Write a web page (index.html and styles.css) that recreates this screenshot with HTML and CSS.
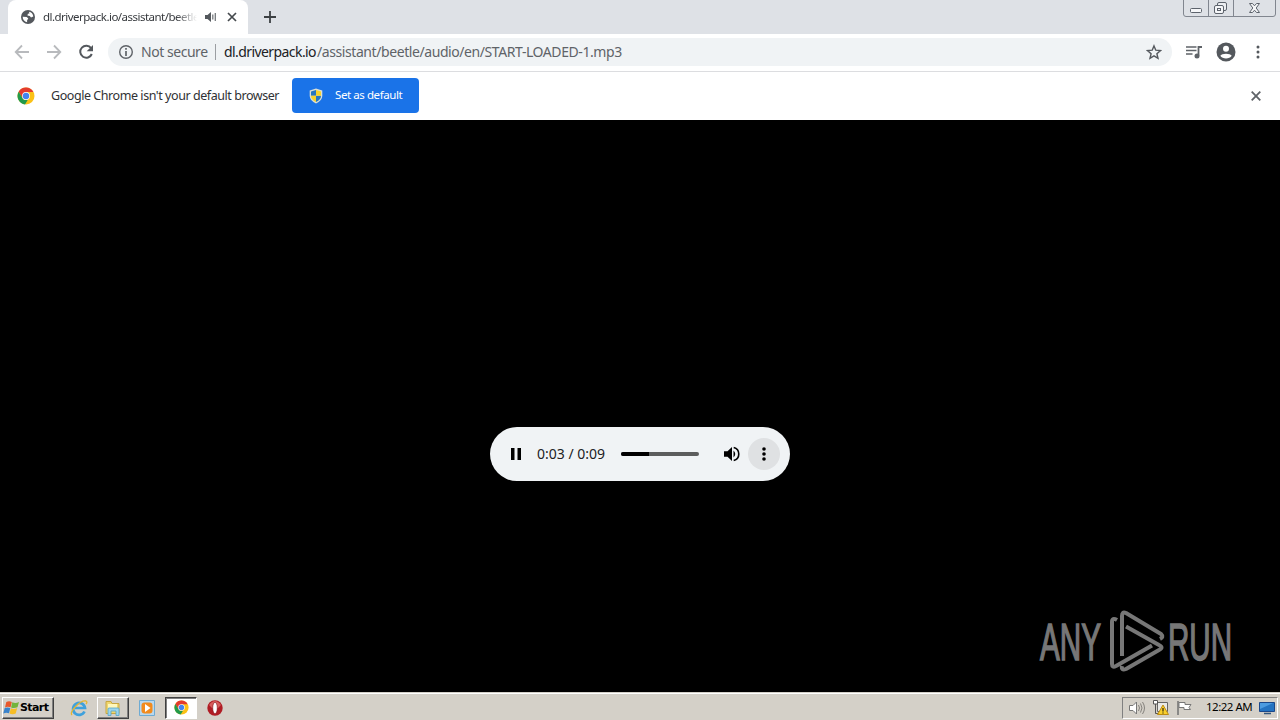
FILE: index.html
```html
<!DOCTYPE html>
<html lang="en">
<head>
<meta charset="utf-8">
<title>dl.driverpack.io/assistant/beetle/audio/en/START-LOADED-1.mp3</title>
<link rel="stylesheet" href="styles.css">
</head>
<body>
<svg class="defs" width="0" height="0">
  <symbol id="chrome" viewBox="0 0 18 18">
    <circle cx="9" cy="9" r="8.500" fill="#fbc116"/>
    <path d="M1.640 4.750A8.500 8.500 0 0 1 16.400 5H9L5.500 11Z" fill="#e33b2e"/>
    <path d="M1.640 4.750 5.500 11A4 4 0 0 0 11 12.500L8 17.450A8.500 8.500 0 0 1 1.640 4.750Z" fill="#229a4b"/>
    <circle cx="9" cy="9" r="3.900" fill="#fff"/><circle cx="9" cy="9" r="3.200" fill="#4384ef"/>
  </symbol>
</svg>
<div class="window">
  <header class="tabstrip">
    <div class="tab">
      <svg class="globe" width="14" height="14" viewBox="0 0 14 14"><circle cx="7" cy="7" r="7" fill="#54585d"/><path d="M1.700 6.800 5.700 7l1.600 1.600-1.200 1.600v2C3.300 11.800 1.600 9.600 1.700 6.800ZM8 1.700C10.500 2 12 4 12.300 6.500L10 7.400 8.800 6 6.400 5.400 6.900 3.800 8.400 3.500Z" fill="#fff"/></svg>
      <span class="tab-title">dl.driverpack.io/assistant/beetle</span>
      <svg class="tab-audio" width="12" height="12" viewBox="0 0 12 12"><path d="M0 4h2.500L6 1v10L2.500 8H0Z" fill="#54585d"/><path d="M7.800 3.500v5M10.300 2v8" stroke="#75797d" stroke-width="1.300"/></svg>
      <svg class="tab-close" width="10" height="10" viewBox="0 0 10 10"><path d="m1 1 8 8M9 1 1 9" stroke="#45494d" stroke-width="1.700"/></svg>
    </div>
    <svg class="new-tab" width="12" height="12" viewBox="0 0 12 12"><path d="M6 0v12M0 6h12" stroke="#3c4043" stroke-width="1.800"/></svg>
    <svg class="caption" width="94" height="18" viewBox="0 0 94 18" fill="none">
      <path d="M.5 0v14q0 2.500 2.500 2.500h87q2.500 0 2.500-2.500V0M25.500 0v16.500M50.500 0v16.500" stroke="#81868f"/>
      <rect x="7.500" y="8.500" width="11" height="4" rx="1" stroke="#5d636c" fill="#f5f6f8"/>
      <rect x="34.500" y="2.500" width="9" height="8" rx="1.500" stroke="#5d636c" fill="#eceef1"/>
      <rect x="31.500" y="5.500" width="9" height="8" rx="1.500" stroke="#5d636c" fill="#f5f6f8"/><rect x="34.500" y="8.500" width="3" height="2" stroke="#5d636c"/>
      <path d="M66.500 3.500h3l2 2.300 2-2.300h3l-3.300 4.500 3.300 4.500h-3l-2-2.300-2 2.300h-3l3.300-4.500Z" stroke="#5d636c" fill="#f5f6f8"/>
    </svg>
  </header>

  <nav class="toolbar">
    <svg class="nav-icon" width="16" height="16" viewBox="0 0 16 16"><path d="M15 8H2M8 1.500 1.700 8 8 14.500" fill="none" stroke="#b8babd" stroke-width="1.800"/></svg>
    <svg class="nav-icon" width="16" height="16" viewBox="0 0 16 16"><path d="M1 8h13M8 1.500 14.300 8 8 14.500" fill="none" stroke="#b8babd" stroke-width="1.800"/></svg>
    <svg class="nav-icon" width="16" height="16" viewBox="0 0 16 16"><path d="M13.100 4.200A6 6 0 1 0 13.800 10" fill="none" stroke="#54585d" stroke-width="2"/><path d="M15 1v6.300H8.700Z" fill="#54585d"/></svg>
    <div class="omnibox">
      <svg width="16" height="16" viewBox="0 0 16 16"><circle cx="8" cy="8" r="6.300" fill="none" stroke="#5f6368" stroke-width="1.400"/><path d="M8 4v1.700M8 7v5" stroke="#5f6368" stroke-width="1.700"/></svg>
      <span class="not-secure">Not secure</span>
      <span class="divider"></span>
      <span class="url"><span class="host">dl.driverpack.io</span><span class="path">/assistant/beetle/audio/en/START-LOADED-1.mp3</span></span>
      <svg class="star" width="16" height="16" viewBox="0 0 16 16"><path d="m8 1.900 1.800 4.300 4.700.4-3.600 3.100 1.100 4.600L8 11.900l-4 2.400 1.100-4.600-3.600-3.100 4.700-.4Z" fill="none" stroke="#54585d" stroke-width="1.400"/></svg>
    </div>
    <svg class="playlist" width="18" height="16" viewBox="0 0 18 16"><path d="M1 3h10.500M1 6.500h10.500M1 10h6.500" stroke="#5f6368" stroke-width="1.600"/><path d="M13.500 11.500V3H17" fill="none" stroke="#5f6368" stroke-width="1.800"/><circle cx="12" cy="12" r="2.500" fill="#5f6368"/></svg>
    <svg class="avatar" width="20" height="20" viewBox="0 0 20 20"><circle cx="10" cy="10" r="9.500" fill="#54585d"/><circle cx="10" cy="6.700" r="3" fill="#fff"/><path d="M4.300 13.800C5.500 10.900 14.500 10.900 15.700 13.800 13.500 17.400 6.500 17.400 4.300 13.800Z" fill="#fff"/></svg>
    <svg class="menu" width="4" height="14" viewBox="0 0 4 14" fill="#54585d"><circle cx="2" cy="2" r="1.500"/><circle cx="2" cy="7" r="1.500"/><circle cx="2" cy="12" r="1.500"/></svg>
  </nav>

  <section class="infobar">
    <svg width="18" height="18"><use href="#chrome"/></svg>
    <span class="info-text">Google Chrome isn't your default browser</span>
    <button class="default-btn">
      <svg width="14" height="16" viewBox="0 0 14 16"><path d="M7 .5 13.300 2.500v5.500Q13 13 7 15.500 1 13 .7 8V2.500Z" fill="#d9dfd6"/><path d="M7 2v5.800H2V3.500ZM7 7.800h5Q12 11.800 7 14Z" fill="#2676c0"/><path d="M7 2v5.800h5V3.500ZM7 7.800H2Q2 11.800 7 14Z" fill="#f6d22c"/></svg>
      <span>Set as default</span>
    </button>
    <svg class="info-close" width="10" height="10" viewBox="0 0 10 10"><path d="m.7.7 8.600 8.600M9.300.7.7 9.300" stroke="#5f6368" stroke-width="1.800"/></svg>
  </section>

  <main class="viewer">
    <div class="player">
      <svg class="pause" width="10" height="12" viewBox="0 0 10 12"><path d="M0 0h3.500v12H0zM6.500 0H10v12H6.500z"/></svg>
      <span class="time">0:03 / 0:09</span>
      <div class="track"><div class="played"></div></div>
      <svg class="volume" width="16" height="16" viewBox="0 0 16 16"><path d="M0 5.200h3.500L8 1v14l-4.500-4.200H0Z"/><path d="M9.500 4.500Q13 8 9.500 11.500Z"/><path d="M9.700 1.500a6.700 6.700 0 0 1 0 13" fill="none" stroke="#000" stroke-width="1.600"/></svg>
      <span class="more"><svg width="4" height="14" viewBox="0 0 4 14"><circle cx="2" cy="2" r="1.800"/><circle cx="2" cy="7" r="1.800"/><circle cx="2" cy="12" r="1.800"/></svg></span>
    </div>
    <svg class="watermark" width="230" height="80" viewBox="0 0 230 80">
      <g class="brand"><text x="5" y="54" textLength="61" lengthAdjust="spacingAndGlyphs">ANY</text><text x="133" y="54" textLength="64" lengthAdjust="spacingAndGlyphs">RUN</text></g>
      <path d="M82 14Q77 11 77 16V58Q77 62 81 60L117 39.500M87 50V10Q87 5 91 7L126 28Q129 31 125 33M91 20.500 124 39Q129 41.500 124 44L91 63Q86 65 87 60" fill="none" stroke="#777" stroke-width="4" stroke-linejoin="round"/>
    </svg>
  </main>

  <footer class="taskbar">
    <div class="start">
      <svg width="17" height="16" viewBox="0 0 17 16"><path d="M3.300 2Q6 .5 8.800 2L7.600 7.200Q4.500 6 2 7.400Z" fill="#e8582c"/><path d="M9.300 2.300Q12.500 4 16 2L14.500 7.200Q11 8.500 8.100 7.400Z" fill="#73b43c"/><path d="M1.700 8Q4.500 7 7.300 8L6 13.200Q3 12 .3 13.600Z" fill="#3983cc"/><path d="M7.900 8.200Q11 9.700 14.200 8L12.700 13.500Q9.500 15 6.500 13.500Z" fill="#f6bd25"/></svg>
      <span>Start</span>
    </div>
    <div class="task ie"><svg width="18" height="18" viewBox="0 0 18 18"><path d="M14.500 12.500A6 6 0 1 1 15 9H5" fill="none" stroke="#3fa1dc" stroke-width="2.700"/><path d="M2 16C-1 13 10 1 16 2c1.500.5.800 2 0 3" fill="none" stroke="#e5b52f" stroke-width="1.300"/></svg></div>
    <div class="task raised"><svg width="18" height="18" viewBox="0 0 18 18"><path d="M2 2.500h5l1 2h7v10H2Z" fill="#efd66f" stroke="#c9a740"/><path d="M4 5h9v4H4Z" fill="#fff7bb"/><path d="M4 16.500V10q0-1 1-1h9q1 0 1 1v6.500h-3V12H7v4.500Z" fill="#9cd5ed" stroke="#55a5c7" stroke-width=".8"/></svg></div>
    <div class="task wmp"><svg width="16" height="16" viewBox="0 0 16 16"><path d="M.5.500h15v15H.5z" fill="#b9d8ee" stroke="#6eabd3"/><rect x="2.500" y="2.500" width="11" height="11" rx="3" fill="#f28b1d"/><path d="m6 4 5.500 4L6 12Z" fill="#fff"/></svg></div>
    <div class="task pressed"><svg width="15" height="15"><use href="#chrome"/></svg></div>
    <div class="task opera"><svg width="16" height="16" viewBox="0 0 16 16"><circle cx="8" cy="8" r="7.700" fill="#b01c24"/><path d="M2 5Q8-3 14 5L11 8H5Z" fill="#d65d5c"/><ellipse cx="8" cy="8" rx="2.300" ry="5.700" fill="#fff" stroke="#810d16" stroke-width=".6"/></svg></div>
    <div class="tray">
      <svg width="18" height="16" viewBox="0 0 18 16"><path d="M1.500 5.500H5L8.500 2v12L5 10.500H1.500Z" fill="#fff" stroke="#777"/><path d="M10.500 5q2 3 0 6M12.500 3.500q3 4.500 0 9M14.500 2q4 6 0 12" fill="none" stroke="#85827d"/></svg>
      <svg class="network" width="18" height="17" viewBox="0 0 18 17"><path d="M5.500 3.500h10v9h-10z" fill="#e9e9e6" stroke="#666"/><path d="M1.500 1.500h4V5h-4Z" fill="#fff" stroke="#555"/><path d="M3.500 5v9.500H7" fill="none" stroke="#555"/><path d="m11 6 5.500 9.500h-11Z" fill="#f9cf2c" stroke="#bc8b12"/><path d="M11 9v3.500M11 13.500v1" stroke="#3b3212" stroke-width="1.300"/></svg>
      <svg class="flag" width="17" height="16" viewBox="0 0 17 16"><path d="M2 1v14" stroke="#777" stroke-width="1.600"/><path d="M3 2.500h6v2h6L13 7.500l1.500 2H8v-2H3Z" fill="#fff" stroke="#777"/></svg>
      <span class="clock">12:22 AM</span>
      <svg class="desktop" width="16" height="14" viewBox="0 0 16 14"><path d="M.5 1.500h15v9H.5z" fill="#2473c1" stroke="#1a478a"/><path d="M1 2h13L1 8Z" fill="#4c9be0"/><path d="M5 12.500h7" stroke="#34577c" stroke-width="1.500"/></svg>
    </div>
  </footer>
</div>
</body>
</html>
```
FILE: styles.css
```css
* { box-sizing: border-box; }
body { margin: 0; background: #000; font-family: "Noto Sans", "Open Sans", sans-serif; }
svg { display: block; flex: none; }
.defs { position: absolute; }
.window { width: 1280px; height: 720px; display: flex; flex-direction: column; overflow: hidden; }
span { white-space: nowrap; }
.tabstrip { height: 34px; flex: none; display: flex; align-items: flex-start; background: #dee1e6; padding-left: 8px; }
.tab { width: 240px; height: 34px; background: #fff; border-radius: 8px 8px 0 0; display: flex; align-items: center; padding-left: 13px; }
.tab-title { width: 154px; margin-left: 8px; padding-bottom: 2px; font-size: 11.500px; letter-spacing: -.52px; color: #36393d; -webkit-mask-image: linear-gradient(90deg, #000 86%, transparent); mask-image: linear-gradient(90deg, #000 86%, transparent); }
.tab-audio { margin-left: 8px; }
.tab-close { margin-left: 10px; }
.new-tab { margin: 11px 0 0 16px; }
.caption { margin-left: auto; margin-right: 3px; }
.toolbar { height: 38px; flex: none; display: flex; align-items: center; padding: 0 20px 2px 14px; background: #fff; border-bottom: 1px solid #dcdde0; }
.nav-icon { margin-right: 16px; }
.omnibox { width: 1064px; height: 28px; margin-left: -2px; display: flex; align-items: center; border-radius: 14px; background: #f0f3f5; padding: 0 10px; font-size: 14px; color: #5f6368; }
.not-secure { width: 67px; margin-left: 7px; letter-spacing: -.46px; }
.divider { width: 1px; height: 16px; margin: 0 8px 0 7px; background: #9b9ea2; }
.url { display: flex; }
.host { width: 93px; letter-spacing: -.58px; color: #202124; }
.path { letter-spacing: -.42px; }
.star { margin-left: auto; }
.playlist { margin-left: 13px; }
.avatar { margin-left: 13px; }
.menu { margin-left: 20px; }
.infobar { height: 48px; flex: none; display: flex; align-items: center; padding: 0 19px 0 17px; background: #fff; }
.info-text { width: 229px; margin-left: 16px; padding-bottom: 1px; font-size: 12.500px; letter-spacing: -.44px; color: #303134; }
.default-btn { width: 127px; height: 35px; margin: 0 0 1px 12px; display: flex; align-items: center; border: 0; border-radius: 4px; padding: 0 0 0 17px; background: #1a73e8; color: #fff; font: 11.500px "Noto Sans", sans-serif; letter-spacing: -.42px; }
.default-btn span { margin-left: 12px; padding-bottom: 2px; }
.info-close { margin-left: auto; }
.viewer { height: 572px; flex: none; position: relative; display: flex; justify-content: center; padding-top: 307px; background: #000; }
.player { width: 300px; height: 54px; display: flex; align-items: center; border-radius: 27px; padding: 0 10px 0 21px; background: #f0f3f5; }
.time { width: 68px; margin-left: 16px; padding-bottom: 2px; font-size: 14px; color: #202124; }
.track { width: 78px; height: 4px; margin-left: 16px; border-radius: 2px; background: #5c5d5d; overflow: hidden; }
.played { width: 36%; height: 100%; background: #000; }
.volume { margin-left: 25px; }
.more { width: 32px; height: 32px; margin-left: auto; border-radius: 50%; background: #dfe1e3; display: flex; align-items: center; justify-content: center; }
.watermark { position: absolute; left: 1035px; top: 486px; }
.brand { fill: #777; stroke: #777; stroke-width: 1.600px; font: 52px "Liberation Sans", sans-serif; }
.taskbar { height: 28px; flex: none; display: flex; align-items: center; padding: 2px 2px 0; background: #d4d0c8; border-top: 1px solid #d4d0c8; box-shadow: inset 0 1px #fff; }
.start { width: 52px; height: 22px; display: flex; align-items: center; border: 1px solid; border-color: #fff #404040 #404040 #fff; box-shadow: inset -1px -1px #808080; font: bold 11px "DejaVu Sans", sans-serif; letter-spacing: -.6px; color: #000; }
.start span { padding-bottom: 1px; }
.task { height: 22px; display: flex; align-items: center; justify-content: center; }
.ie { width: 43px; padding-left: 7px; }
.raised { width: 32px; border: 1px solid; border-color: #fff #404040 #404040 #fff; box-shadow: inset -1px -1px #808080; }
.wmp { width: 36px; }
.pressed { width: 32px; background: #fff; border: 1px solid; border-color: #404040 #fff #fff #404040; box-shadow: inset 1px 1px #808080; }
.opera { width: 35px; }
.tray { width: 156px; height: 22px; margin-left: auto; display: flex; align-items: center; padding-left: 5px; border: 1px solid; border-color: #808080 #fff #fff #808080; }
.network { margin-left: 6px; }
.flag { margin-left: 6px; }
.clock { width: 47px; margin-left: 13px; padding-bottom: 2px; font: 11.500px "Noto Sans", sans-serif; letter-spacing: -.5px; color: #000; }
.desktop { margin-left: 6px; }
```
